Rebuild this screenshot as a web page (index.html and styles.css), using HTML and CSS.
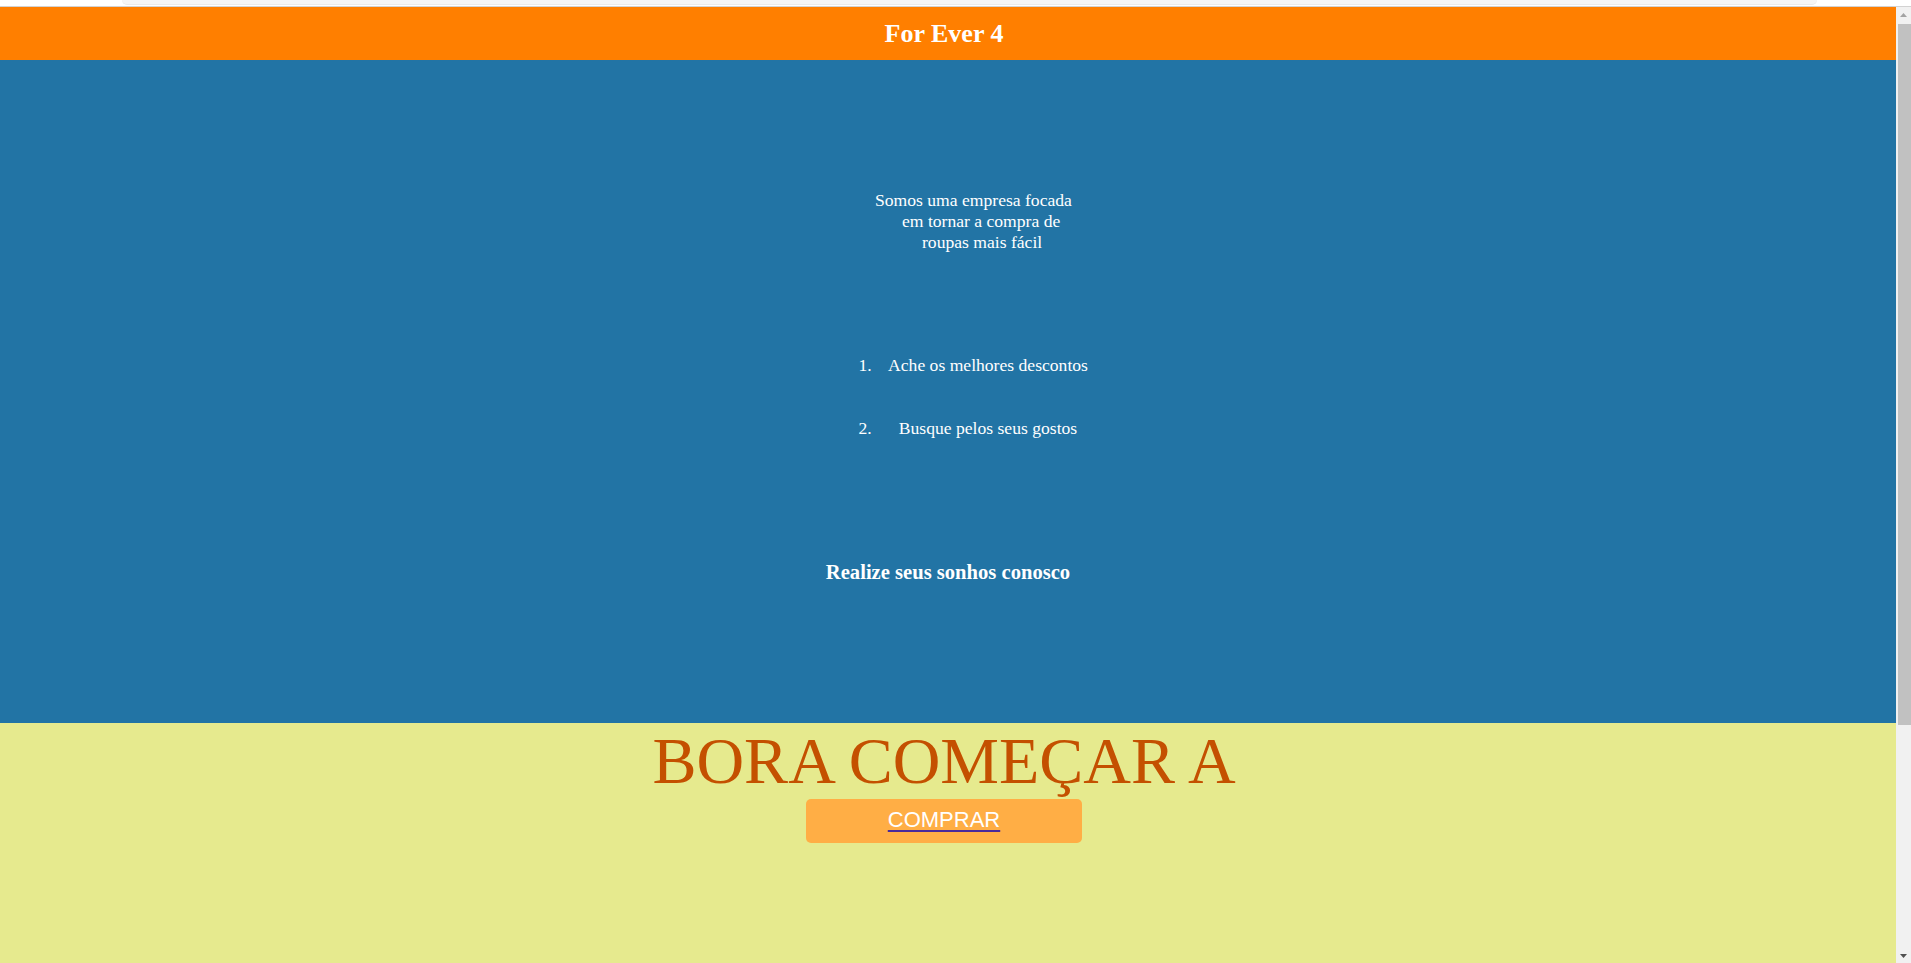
FILE: index.html
```html
<!DOCTYPE html>
<html lang="pt-BR">
<head>
<meta charset="utf-8">
<title>For Ever 4</title>
<link rel="stylesheet" href="styles.css">
</head>
<body>
<div class="frame">
  <div class="topbar"><div class="topbar-pill"></div></div>
  <div class="window">
    <div class="viewport">
      <header class="site-header">
        <h1 class="brand">For Ever 4</h1>
      </header>
      <section class="hero">
        <p class="intro">
          <span class="intro-line">Somos uma empresa focada</span>
          <span class="intro-line indent-1">em tornar a compra de</span>
          <span class="intro-line indent-2">roupas mais fácil</span>
        </p>
        <ol class="steps">
          <li class="step">Ache os melhores descontos</li>
          <li class="step">Busque pelos seus gostos</li>
        </ol>
        <h3 class="tagline">Realize seus sonhos conosco</h3>
      </section>
      <section class="cta-section">
        <h2 class="cta-title">BORA COMEÇAR A</h2>
        <a class="cta-link" href="#"><span class="cta-button">COMPRAR</span></a>
      </section>
    </div>
    <div class="scrollbar" aria-hidden="true">
      <div class="sb-button">
        <svg width="7" height="4" viewBox="0 0 7 4"><polygon points="3.5,0 7,4 0,4" fill="#a3a3a3"/></svg>
      </div>
      <div class="sb-track"><div class="sb-thumb"></div></div>
      <div class="sb-button">
        <svg width="7" height="4" viewBox="0 0 7 4"><polygon points="0,0 7,0 3.5,4" fill="#505050"/></svg>
      </div>
    </div>
  </div>
</div>
</body>
</html>
```

FILE: styles.css
```css
html, body {
  margin: 0;
  padding: 0;
  height: 100%;
  overflow: hidden;
}

body {
  font-family: "Liberation Serif", "Times New Roman", serif;
  background: #ffffff;
}

.frame {
  display: flex;
  flex-direction: column;
  height: 100%;
}

.topbar {
  flex: 0 0 6px;
  background: #ffffff;
  border-bottom: 1px solid #d2d2d2;
  display: flex;
}

.topbar-pill {
  width: 1695px;
  margin-left: 122px;
  height: 4px;
  background: #f5f5f5;
  border-bottom: 1px solid #eaeaea;
  border-radius: 0 0 6px 6px;
}

.window {
  flex: 1 1 auto;
  display: flex;
  min-height: 0;
}

.viewport {
  flex: 1 1 auto;
  overflow: hidden;
}

.scrollbar {
  flex: 0 0 15px;
  display: flex;
  flex-direction: column;
  background: #f1f1f1;
}

.sb-button {
  flex: 0 0 15px;
  display: flex;
  align-items: center;
  justify-content: center;
}

.sb-track {
  flex: 1 1 auto;
  padding-top: 2px;
}

.sb-thumb {
  height: 701px;
  margin-left: 2px;
  background: #c1c1c1;
}

.site-header {
  background: #ff7f00;
  height: 53px;
  padding-right: 8px;
}

.brand {
  margin: 0;
  font-size: 26px;
  line-height: 53px;
  font-weight: bold;
  text-align: center;
  color: #ffffff;
}

.hero {
  background: #2274a5;
  height: 663px;
  box-sizing: border-box;
  padding-top: 130px;
  color: #ffffff;
  overflow: hidden;
}

.intro {
  margin: 0 0 0 calc(50% - 73px);
  font-size: 17.6px;
  line-height: 21px;
}

.intro-line {
  display: block;
  white-space: nowrap;
}

.indent-1 {
  padding-left: 27px;
}

.indent-2 {
  padding-left: 47px;
}

.steps {
  width: 224px;
  margin: 102px 0 0 calc(50% - 112px);
  padding-left: 40px;
  font-size: 17.6px;
  line-height: 20.3px;
}

.step {
  text-align: center;
  margin-bottom: 42.7px;
}

.step:last-child {
  margin-bottom: 0;
}

.tagline {
  margin: 123px 0 0 0;
  font-size: 20.6px;
  font-weight: bold;
  text-align: center;
}

.cta-section {
  background: #e6ea8e;
  height: 548px;
  padding-right: 8px;
  display: flex;
  flex-direction: column;
  align-items: center;
}

.cta-title {
  margin: 0;
  font-size: 66px;
  font-weight: normal;
  color: #c45000;
  line-height: 76px;
  white-space: nowrap;
}

.cta-link {
  color: #551a8b;
  text-decoration: underline;
  text-decoration-color: #4a2a9a;
  text-decoration-thickness: 2px;
  text-underline-offset: 3px;
}

.cta-button {
  display: block;
  width: 276px;
  height: 44px;
  box-sizing: border-box;
  padding-top: 8px;
  background: #ffae45;
  border-radius: 5px;
  color: #ffffff;
  font-family: "Liberation Sans", Arial, sans-serif;
  font-size: 22px;
  line-height: 25px;
  text-align: center;
}
```
